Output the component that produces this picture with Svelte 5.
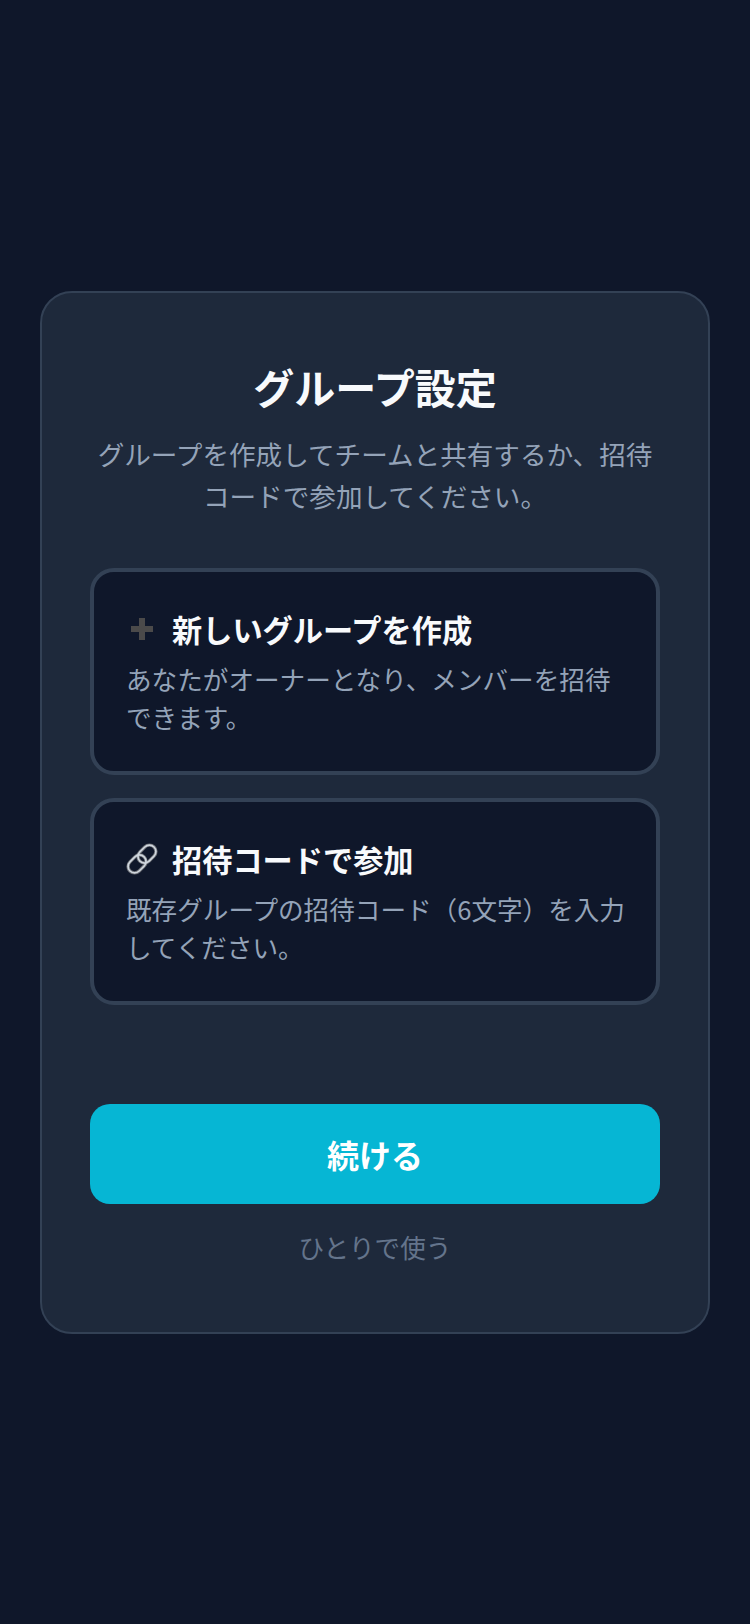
<script>
  const options = [
    { id: "create", icon: "plus", title: "新しいグループを作成", desc: "あなたがオーナーとなり、メンバーを招待できます。" },
    { id: "join", icon: "link", title: "招待コードで参加", desc: "既存グループの招待コード（6文字）を入力してください。" },
  ];
</script>

<main class="page">
  <section class="card">
    <h1>グループ設定</h1>
    <p class="lead">グループを作成してチームと共有するか、招待コードで参加してください。</p>

    <div class="options">
      {#each options as o (o.id)}
        <button class="option">
          <span class="head">
            {#if o.icon === "plus"}
              <svg class="icon" viewBox="0 0 32 32" aria-hidden="true">
                <path d="M13 5h6v8h8v6h-8v8h-6v-8H5v-6h8z" fill="#4b4a4a" />
              </svg>
            {:else}
              <svg class="icon" viewBox="0 0 32 32" aria-hidden="true" fill="none">
                <g transform="rotate(-45 16 16)">
                  <rect x="-1" y="9.5" width="20" height="13" rx="6.5" stroke="#6b6e74" stroke-width="3.4" />
                  <rect x="13" y="9.5" width="20" height="13" rx="6.5" stroke="#6b6e74" stroke-width="3.4" />
                  <rect x="-1" y="9.5" width="20" height="13" rx="6.5" stroke="#cfd6de" stroke-width="1.7" />
                  <rect x="13" y="9.5" width="20" height="13" rx="6.5" stroke="#cfd6de" stroke-width="1.7" />
                </g>
              </svg>
            {/if}
            <span class="title">{o.title}</span>
          </span>
          <span class="desc">{o.desc}</span>
        </button>
      {/each}
    </div>

    <button class="primary">続ける</button>
    <button class="skip">ひとりで使う</button>
  </section>
</main>

<style>
  :global(body) {
    background: #0f172a;
  }
  .page {
    min-height: 1624px;
    display: flex;
    align-items: center;
    justify-content: center;
    font-family: "Noto Sans CJK JP", "Noto Sans", sans-serif;
  }
  .card {
    width: 670px;
    box-sizing: border-box;
    padding: 65px 48px 66px;
    display: flex;
    flex-direction: column;
    background: #1e293b;
    border: 2px solid #334155;
    border-radius: 32px;
  }
  h1 {
    margin: 0 0 19px;
    font-size: 41px;
    line-height: 56px;
    font-weight: 700;
    text-align: center;
    color: #f8fafc;
  }
  .lead {
    margin: 0 0 51px;
    font-size: 26.6px;
    line-height: 42px;
    text-align: center;
    color: #94a3b8;
  }
  .options {
    display: flex;
    flex-direction: column;
    gap: 23px;
    margin-bottom: 99px;
  }
  button {
    font-family: inherit;
    cursor: pointer;
  }
  .option {
    display: flex;
    flex-direction: column;
    gap: 10px;
    padding: 36px 24px 35px 32px;
    text-align: left;
    background: #0f172a;
    border: 4px solid #334155;
    border-radius: 24px;
  }
  .head {
    display: flex;
    align-items: center;
    gap: 14px;
  }
  .icon {
    width: 32px;
    height: 32px;
    flex: none;
  }
  .title {
    font-size: 30.2px;
    line-height: 42px;
    font-weight: 700;
    color: #f8fafc;
  }
  .desc {
    font-size: 25.6px;
    line-height: 38px;
    color: #94a3b8;
  }
  .primary {
    height: 100px;
    font-size: 32px;
    font-weight: 700;
    color: #fff;
    background: #06b6d4;
    border: 0;
    border-radius: 20px;
  }
  .skip {
    margin-top: 24px;
    padding: 0;
    font-size: 25.6px;
    line-height: 38px;
    color: #64748b;
    background: none;
    border: 0;
  }
</style>
